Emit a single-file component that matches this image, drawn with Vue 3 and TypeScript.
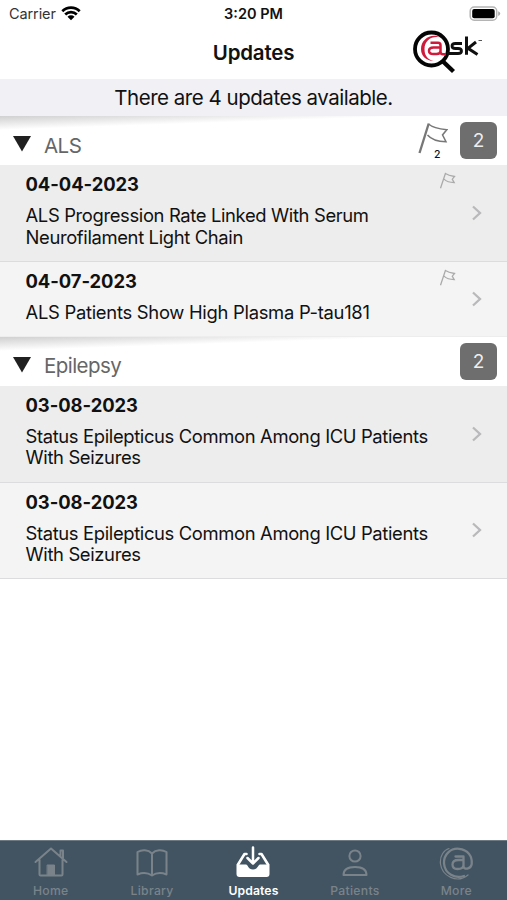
<script setup lang="ts">
interface UpdateItem { date: string; lines: string[]; flagged: boolean }
interface Section { name: string; flags: number; items: UpdateItem[] }

const seizures: UpdateItem = {
  date: '03-08-2023',
  lines: ['Status Epilepticus Common Among ICU Patients', 'With Seizures'],
  flagged: false,
}
const sections: Section[] = [
  {
    name: 'ALS',
    flags: 2,
    items: [
      { date: '04-04-2023', lines: ['ALS Progression Rate Linked With Serum', 'Neurofilament Light Chain'], flagged: true },
      { date: '04-07-2023', lines: ['ALS Patients Show High Plasma P-tau181'], flagged: true },
    ],
  },
  { name: 'Epilepsy', flags: 0, items: [seizures, { ...seizures }] },
]
const tabs: string[] = ['Home', 'Library', 'Updates', 'Patients', 'More']
const active = 'Updates'
</script>

<template>
  <div class="screen">
    <header class="top">
      <div class="status">
        <div class="carrier">
          <span>Carrier</span>
          <svg width="20" height="15" viewBox="0 0 20 15">
            <path d="M1.300 5.200a12.500 12.500 0 0 1 17.400 0M4.200 8.500a8.300 8.300 0 0 1 11.600 0" fill="none" stroke="#000" stroke-width="2.700" />
            <path d="M6.500 10.700a5 5 0 0 1 7 0L10 14.200z" />
          </svg>
        </div>
        <span class="time">3:20 PM</span>
        <div class="battery">
          <svg width="32" height="16" viewBox="0 0 32 16">
            <rect x="1.200" y="1" width="26.500" height="13.200" rx="4" fill="#fff" stroke="#b4b4b4" stroke-width="1.500" />
            <rect x="3.200" y="3" width="22.500" height="9.300" rx="2" />
            <path d="M29.200 5.200q2 .8 2 2.400t-2 2.400z" fill="#aaa" />
          </svg>
        </div>
      </div>
      <div class="nav">
        <h1>Updates</h1>
        <svg class="logo" width="76" height="46" viewBox="0 0 76 46">
          <circle cx="20.500" cy="20" r="16.500" fill="#fff" stroke="#050505" stroke-width="3.800" />
          <path d="m31.500 32 11 10.500" stroke="#050505" stroke-width="4.400" fill="none" />
          <path d="M29 8.500C21.500 3.500 10 9.500 10 20c0 7.500 5.500 11.500 12.500 12C16 30 13.500 26 13.500 20c0-8.500 7.500-13.500 15.500-11.500z" fill="#cf1b3b" />
          <path d="M19.500 13.800H27q2.500 0 2.500 2.500V23q0 2.200 2.500 2.200h3M29.500 18.500h-7q-4.500 0-4.500 3.300t4.500 3.300h3q4 0 4-3" stroke="#cf1b3b" stroke-width="2.500" fill="none" />
          <path d="M51 14.500h-6.500q-3.500 0-3.500 2.500t3.500 2.500H47q3.500 0 3.500 2.500T47 24.500H36" stroke="#101010" stroke-width="2.800" fill="none" />
          <path d="M55.500 7.500v18.300M65 13l-8 6.300 9.500 6.200" stroke="#101010" stroke-width="3" fill="none" />
          <path d="M67.500 11.500h3.500" stroke="#555" stroke-width="1" />
        </svg>
      </div>
    </header>
    <p class="notice">There are 4 updates available.</p>

    <section v-for="section in sections" :key="section.name">
      <div class="section-head">
        <svg class="shade" width="507" height="16" viewBox="0 0 507 16">
          <defs>
            <linearGradient :id="'shade-' + section.name" gradientUnits="userSpaceOnUse" x1="0" y1="0" x2=".48" y2="14">
              <stop offset="0" stop-color="#d0d0d0" /><stop offset=".45" stop-color="#e5e5e5" /><stop offset="1" stop-color="#fff" />
            </linearGradient>
          </defs>
          <path d="M0 0H507V16H0z" :fill="`url(#shade-${section.name})`" />
        </svg>
        <svg class="triangle" width="18" height="16" viewBox="0 0 18 16"><path d="M0 0h18L9 15.500z" fill="#202020" /></svg>
        <h2>{{ section.name }}</h2>
        <div v-if="section.flags" class="flag-count">
          <svg width="30" height="33" viewBox="0 0 30 33">
            <path d="M10.500 2q5 4.300 18.300 5.700l-4.300 5.200 3.500 6.800q-13-.2-18.500-6.700" fill="none" stroke="#777" stroke-width="1.500" />
            <path d="M1.500 31 10.700 1.500" stroke="#777" stroke-width="2.300" />
          </svg>
          <span>{{ section.flags }}</span>
        </div>
        <div class="count">{{ section.items.length }}</div>
      </div>
      <article v-for="(item, i) in section.items" :key="i" class="row" :class="{ alternate: i % 2 === 1, short: item.lines.length === 1 }">
        <div class="copy">
          <h3>{{ item.date }}</h3>
          <p v-for="line in item.lines" :key="line">{{ line }}</p>
        </div>
        <svg v-if="item.flagged" class="flag" width="17" height="18" viewBox="0 0 17 18">
          <path d="M1.500 16.300 6.400 1.500q3 2 9.100 3l-2.200 2.700 1.900 3.300q-6.700 0-10.200-3.400" fill="none" stroke="#aaa" stroke-width="1.300" />
        </svg>
        <svg class="chevron" width="12" height="18" viewBox="0 0 12 18"><path d="M2 2.500 9 9l-7 6.500" fill="none" stroke="#b9b9bb" stroke-width="2.300" /></svg>
      </article>
    </section>

    <nav class="tabs">
      <div v-for="tab in tabs" :key="tab" class="tab" :class="{ active: tab === active }">
        <svg width="38" height="38" viewBox="0 0 38 38" fill="none" stroke="currentColor" stroke-width="2" stroke-linecap="round" stroke-linejoin="round">
          <template v-if="tab === 'Home'">
            <path d="M3.500 20 19 6.500 34.500 20M7.500 18v14.500q0 1 1 1h21q1 0 1-1V18M28.500 13.500V8.500h2.500v7.500" />
            <path d="M15.500 23h7v10.500h-7z" fill="currentColor" stroke-width="1" />
          </template>
          <path v-else-if="tab === 'Library'" d="M19 11.500c-4-4-10-4-14.500-1.500v22.500c5-2 10-2 14.500 1 4.500-3 9.500-3 14.500-1V10C29 7.500 23 7.500 19 11.500zV33" />
          <template v-else-if="tab === 'Updates'">
            <path d="M12.500 12h-2L4 22.500M25.500 12h2L34 22.500" stroke-width="2.600" />
            <path d="M2.500 22.500H12c2 0 2 5 7 5s5-5 7-5h9.500V32q0 3-3 3h-27q-3 0-3-3z" fill="currentColor" stroke="none" />
            <path d="M19 5.500v15.500M13.500 16l5.500 5.500 5.500-5.500" stroke-width="2.500" />
          </template>
          <template v-else-if="tab === 'Patients'">
            <circle cx="19" cy="14" r="5.600" /><path d="M7.500 33c0-5 4-8 11.500-8s11.500 3 11.500 8z" />
          </template>
          <template v-else>
            <path d="M31 33C20 42 5 34 3.500 22 2.500 14 7 8 12 6.500" stroke-width="1.200" />
            <path d="M27 34C18 37 8 32 7 21.500 6.500 12 14 6 22 6.800c9 .7 13.500 7.700 12.700 15.200-.7 5-8.200 6.500-8.200 2V14.500h-8M26.500 18h-5q-6 0-6 4.500t5 4.500q6 0 6-4" stroke-width="2.300" />
          </template>
        </svg>
        <span>{{ tab }}</span>
      </div>
    </nav>
  </div>
</template>

<style>
body { margin: 0; background: #fff; }
</style>
<style scoped>
* { box-sizing: border-box; }
h1, h2, h3, p { margin: 0; }
svg { display: block; flex: none; }
.screen { width: 507px; height: 900px; display: flex; flex-direction: column; background: #fff; font-family: Inter, "Liberation Sans", sans-serif; color: #111; overflow: hidden; }
.top { height: 79px; flex: none; }
.status { height: 27px; display: grid; grid-template-columns: 1fr auto 1fr; align-items: center; padding: 0 9px; font-size: 14.500px; }
.carrier { display: flex; align-items: center; gap: 5px; color: #333; letter-spacing: -.1px; }
.time { font-weight: 600; font-size: 14.500px; }
.battery { justify-self: end; margin-right: -3px; }
.nav { height: 52px; display: grid; grid-template-columns: 1fr auto 1fr; align-items: center; }
.nav h1 { grid-column: 2; font-size: 20.500px; line-height: 26px; font-weight: 600; letter-spacing: -.2px; margin-top: -1px; }
.logo { justify-self: end; margin-right: 20px; margin-top: -3px; }
.notice { height: 37px; flex: none; background: #f0f0f5; text-align: center; font-size: 20.500px; line-height: 38px; letter-spacing: -.48px; }
.section-head { height: 49px; position: relative; display: flex; align-items: center; padding: 0 10px 0 13px; background: #fff; }
.shade { position: absolute; top: 0; left: 0; }
.triangle { position: relative; margin-top: 7px; }
h2 { position: relative; flex: 1; margin: 10px 0 0 13px; color: #666; font-size: 20.500px; line-height: 26px; font-weight: 400; letter-spacing: -.55px; }
.flag-count { position: relative; margin-right: 12px; margin-top: -4px; }
.flag-count span { position: absolute; left: 16px; top: 27px; font-size: 10.500px; line-height: 12px; font-weight: 500; }
.count { position: relative; width: 37px; height: 37px; border-radius: 6px; background: #6e6e6e; color: #eee; text-align: center; font-size: 19px; line-height: 37px; }
.row { height: 96.800px; position: relative; display: flex; align-items: center; justify-content: space-between; padding: 0 24px 0 25.500px; background: #ededed; border-bottom: 1px solid #dcdcdf; }
.row.alternate { background: #f4f4f4; }
.row.short { height: 75px; border-bottom-color: #ededed; }
.copy { align-self: flex-start; padding-top: 7px; }
h3 { margin-bottom: 9px; font-size: 18.400px; line-height: 24px; font-weight: 700; letter-spacing: -.05px; }
.copy p { font-size: 18.400px; line-height: 21.600px; letter-spacing: -.35px; white-space: nowrap; }
.short .copy p { letter-spacing: -.28px; }
.flag { position: absolute; left: 439px; top: 7px; }
.tabs { height: 60px; flex: none; display: grid; grid-template-columns: repeat(5, 1fr); margin-top: auto; background: #425462; border-top: 1px solid #6d7983; }
.tab { display: flex; flex-direction: column; align-items: center; color: #7a838a; font-size: 12.200px; line-height: 15px; font-weight: 500; letter-spacing: .3px; }
.tab svg { margin-top: 1px; }
.tab span { margin-top: 3px; }
.tab.active { color: #fff; font-weight: 600; letter-spacing: .1px; }
</style>
